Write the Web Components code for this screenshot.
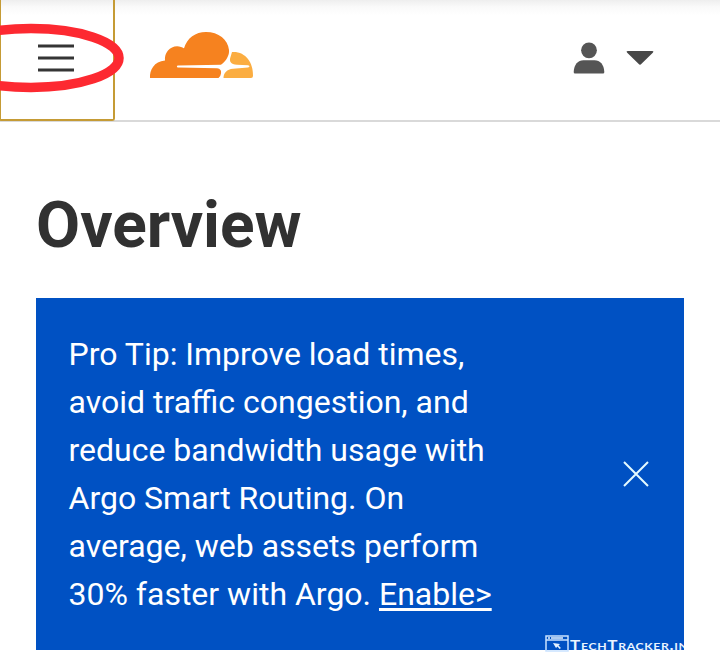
<!DOCTYPE html>
<html lang="en">
<head>
<meta charset="utf-8">
<title>Overview</title>
<style>
html,body{margin:0;background:#fff}
body{font-family:Roboto,"Liberation Sans",sans-serif;color:#313131;width:720px;height:667px;overflow:hidden}
</style>
</head>
<body>
<dash-page></dash-page>
<script>
const define = (name, html) => customElements.define(name, class extends HTMLElement {
  constructor() {
    super();
    this.attachShadow({ mode: 'open' }).innerHTML = html;
  }
});

define('menu-button', `
<style>
:host{display:flex;position:relative;box-sizing:border-box;width:115px;height:121px;border:2px solid #c59b35;border-top:0;border-left-width:1px;border-radius:0 0 3px 1px}
.bars{display:block;margin:44px 0 0 37px}
.ring{position:absolute;left:-1px;top:0;z-index:2}
</style>
<svg class="bars" width="36" height="28" viewBox="0 0 36 28" stroke="#353535" stroke-width="3"><path d="M0 2h36M0 14h36M0 26h36"/></svg>
<svg class="ring" width="130" height="110" viewBox="0 0 130 110" fill="none" stroke="#fd2931" stroke-width="9.5"><ellipse cx="31" cy="58" rx="88" ry="29.5"/></svg>`);

define('cloud-logo', `
<style>:host{display:block;margin:31px 0 0 34px}svg{display:block}</style>
<svg width="106" height="48" viewBox="149 31 106 48">
<path fill="#f6821f" d="M150 78C149.500 70 154 61.500 165 60.500C164 52 172 44 181 47C182 47 183 47.800 184 48.300C187 38 195.500 32 206 32C218.500 32 228 39.500 229 50C229.500 55 226.500 61 221 64.700L178 65.500C176.500 65.700 176.500 67.300 178 67.500L217 68.200C220.500 68.500 221.500 71 221 73.500Q220.500 77 218.500 78Z"/>
<path fill="#fbad41" d="M232 52C245 51 253.500 62 253 76Q253 78 251 78H223.500C223.500 73 227 69 233 68.700L248 67.500C250 67.200 250 65.500 248 65.300L237 64.700C230.500 64.500 229 61 230.500 57Z"/>
</svg>`);

define('account-menu', `
<style>:host{display:flex;gap:21px;align-items:center;margin:42px 66px 0 auto;height:32px}svg{display:block}</style>
<svg width="32" height="32" viewBox="0 0 32 32" fill="#555"><circle cx="16" cy="8.300" r="7.900"/><path d="M.7 30C1 22.500 5 18.300 10.500 18.300h11C27 18.300 31 22.500 31.300 30Q31.300 31.500 30 31.500H2Q.7 31.500.7 30Z"/></svg>
<svg width="28" height="16" viewBox="0 0 28 16" fill="#484848"><path d="M2 1H26Q28.300 1 26.800 2.700L15.500 13.700Q14 15.600 12.500 13.700L1.200 2.700Q-.3 1 2 1Z"/></svg>`);

define('top-bar', `
<style>:host{display:flex;align-items:flex-start;box-sizing:border-box;height:122px;border-bottom:2px solid #d9d9d9;background:linear-gradient(#eee,#fafafa 7px,#fff 16px)}
menu-button{flex:none}</style>
<menu-button></menu-button><cloud-logo></cloud-logo><account-menu></account-menu>`);

define('site-mark', `
<style>
:host{display:flex;position:absolute;left:509px;top:337px;width:139px;height:18px;overflow:hidden;color:#e9f4ff}
svg{display:block;flex:none}
span{font:700 14px/18px Lato,sans-serif;font-variant:small-caps;letter-spacing:.55px;white-space:nowrap;margin:1px 0 0 1px;transform:scaleX(1.22);transform-origin:left}
</style>
<svg width="24" height="17" viewBox="0 0 24 17" fill="none" stroke="#c9e2ff" stroke-width="1.500"><path d="M1 16V1H23V16ZM1 5H23"/><path stroke="none" fill="#e5f2ff" d="M3 2.300h2v1.500H3zm3 0h12v1.500H6zM8 8l7 1-1.500 1.500L16 13l-1.500 1-2-2.500L11 13Z"/></svg>
<span>TechTracker.in</span>`);

define('tip-banner', `
<style>
:host{display:flex;position:relative;box-sizing:border-box;height:352px;padding:32px 35px 32px 32.500px;align-items:center;justify-content:space-between;background:#0051c3;color:#fff;font-size:32px;line-height:48px}
p{margin:0;white-space:nowrap}
.close{display:block}
</style>
<p><slot></slot></p>
<svg class="close" width="26" height="26" viewBox="0 0 26 26" stroke="#e4fbff" stroke-width="2"><path d="M1 1L25 25M25 1L1 25"/></svg>
<site-mark></site-mark>`);

define('dash-page', `
<style>
:host{display:block}
main{padding:64px 36px 0}
h1{margin:0 0 32px;font-size:64px;line-height:80px;font-weight:700;color:#313131}
a{color:inherit;text-decoration:underline;text-decoration-thickness:3px;text-underline-offset:3px;text-decoration-skip-ink:none}
</style>
<top-bar></top-bar>
<main><h1>Overview</h1>
<tip-banner>Pro Tip: Improve load times,<br>avoid traffic congestion, and<br>reduce bandwidth usage with<br>Argo Smart Routing. On<br>average, web assets perform<br>30% faster with Argo. <a href="#">Enable&gt;</a></tip-banner></main>`);
</script>
</body>
</html>
